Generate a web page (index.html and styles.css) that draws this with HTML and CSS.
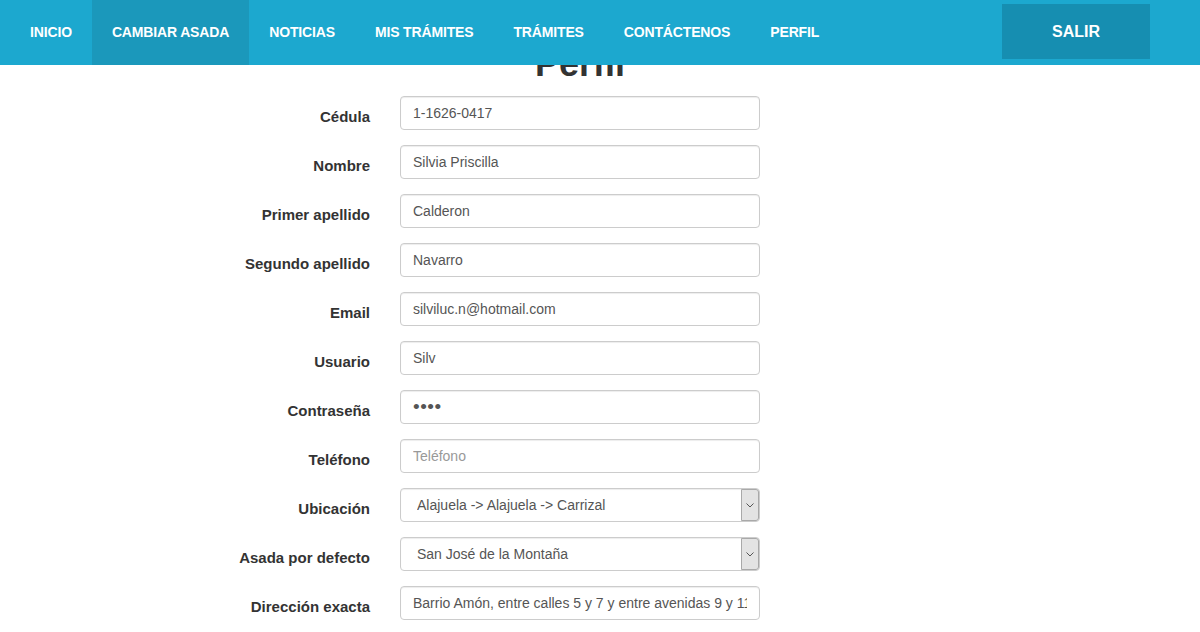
FILE: index.html
```html
<!DOCTYPE html>
<html lang="es">
<head>
<meta charset="utf-8">
<title>Perfil</title>
<link rel="stylesheet" href="styles.css">
</head>
<body>
<nav class="navbar">
  <ul class="nav-links">
    <li><a href="#">INICIO</a></li>
    <li class="active"><a href="#">CAMBIAR ASADA</a></li>
    <li><a href="#">NOTICIAS</a></li>
    <li><a href="#">MIS TRÁMITES</a></li>
    <li><a href="#">TRÁMITES</a></li>
    <li><a href="#">CONTÁCTENOS</a></li>
    <li><a href="#">PERFIL</a></li>
  </ul>
  <a class="logout" href="#">SALIR</a>
</nav>
<main class="content">
  <h1 class="title">Perfil</h1>
  <form class="form">
    <label class="lbl">Cédula</label>
    <input class="ctl" type="text" value="1-1626-0417">
    <label class="lbl">Nombre</label>
    <input class="ctl" type="text" value="Silvia Priscilla">
    <label class="lbl">Primer apellido</label>
    <input class="ctl" type="text" value="Calderon">
    <label class="lbl">Segundo apellido</label>
    <input class="ctl" type="text" value="Navarro">
    <label class="lbl">Email</label>
    <input class="ctl" type="text" value="silviluc.n@hotmail.com">
    <label class="lbl">Usuario</label>
    <input class="ctl" type="text" value="Silv">
    <label class="lbl">Contraseña</label>
    <input class="ctl pwd" type="password" value="1234">
    <label class="lbl">Teléfono</label>
    <input class="ctl" type="text" placeholder="Teléfono">
    <label class="lbl">Ubicación</label>
    <div class="select-wrap">
      <select class="ctl sel"><option>Alajuela -&gt; Alajuela -&gt; Carrizal</option></select>
      <span class="sel-btn"><svg width="8" height="5" viewBox="0 0 8 5"><path d="M0.5 0.5 L4 4 L7.5 0.5" fill="none" stroke="#555" stroke-width="1"/></svg></span>
    </div>
    <label class="lbl">Asada por defecto</label>
    <div class="select-wrap">
      <select class="ctl sel"><option>San José de la Montaña</option></select>
      <span class="sel-btn"><svg width="8" height="5" viewBox="0 0 8 5"><path d="M0.5 0.5 L4 4 L7.5 0.5" fill="none" stroke="#555" stroke-width="1"/></svg></span>
    </div>
    <label class="lbl">Dirección exacta</label>
    <input class="ctl" type="text" value="Barrio Amón, entre calles 5 y 7 y entre avenidas 9 y 11">
  </form>
</main>
</body>
</html>
```

FILE: styles.css
```css
* { box-sizing: border-box; }
html, body { margin: 0; padding: 0; }
body {
  font-family: "Liberation Sans", Arial, sans-serif;
  font-size: 14px;
  color: #333;
  background: #fff;
  overflow: hidden;
}
.navbar {
  position: fixed;
  top: 0; left: 0; right: 0;
  height: 65px;
  background: #1ca8cf;
  display: flex;
  align-items: flex-start;
  z-index: 10;
}
.nav-links {
  list-style: none;
  margin: 0;
  padding: 0 0 0 10px;
  display: flex;
}
.nav-links li a {
  display: block;
  padding: 0 20px;
  line-height: 65px;
  height: 65px;
  color: #fff;
  font-weight: bold;
  font-size: 14px;
  letter-spacing: -0.15px;
  text-decoration: none;
}
.nav-links li.active a { background: #1b98bb; }
.logout {
  margin: 4px 50px 0 auto;
  width: 148px;
  height: 55px;
  line-height: 55px;
  text-align: center;
  background: #168eb1;
  color: #fff;
  font-weight: bold;
  font-size: 16px;
  text-decoration: none;
}
.content { padding-top: 44px; }
.title {
  margin: 0 0 12px 0;
  padding-right: 40px;
  text-align: center;
  font-size: 36px;
  line-height: 40px;
  font-weight: bold;
  color: #333;
}
.form {
  display: grid;
  grid-template-columns: 370px 360px;
  column-gap: 30px;
  row-gap: 15px;
}
.lbl {
  text-align: right;
  font-weight: bold;
  font-size: 15px;
  padding-top: 10px;
  line-height: 21px;
}
.ctl {
  display: block;
  width: 360px;
  height: 34px;
  padding: 6px 12px;
  font-family: "Liberation Sans", Arial, sans-serif;
  font-size: 14px;
  line-height: 20px;
  color: #555;
  background: #fff;
  border: 1px solid #ccc;
  border-radius: 4px;
  box-shadow: inset 0 1px 1px rgba(0,0,0,.075);
  outline: none;
}
.ctl::placeholder { color: #999; }
.pwd { font-size: 19px; letter-spacing: 0.5px; padding-top: 4px; padding-bottom: 4px; line-height: 24px; }
.select-wrap { position: relative; width: 360px; height: 34px; }
.sel {
  -webkit-appearance: none;
  appearance: none;
  padding-left: 16px;
}
.sel-btn {
  position: absolute;
  top: 1px;
  right: 1px;
  width: 18px;
  height: 32px;
  background: #e3e3e3;
  border: 1px solid #a9a9a9;
  border-radius: 0 3px 3px 0;
  display: flex;
  align-items: center;
  justify-content: center;
  pointer-events: none;
}
```
